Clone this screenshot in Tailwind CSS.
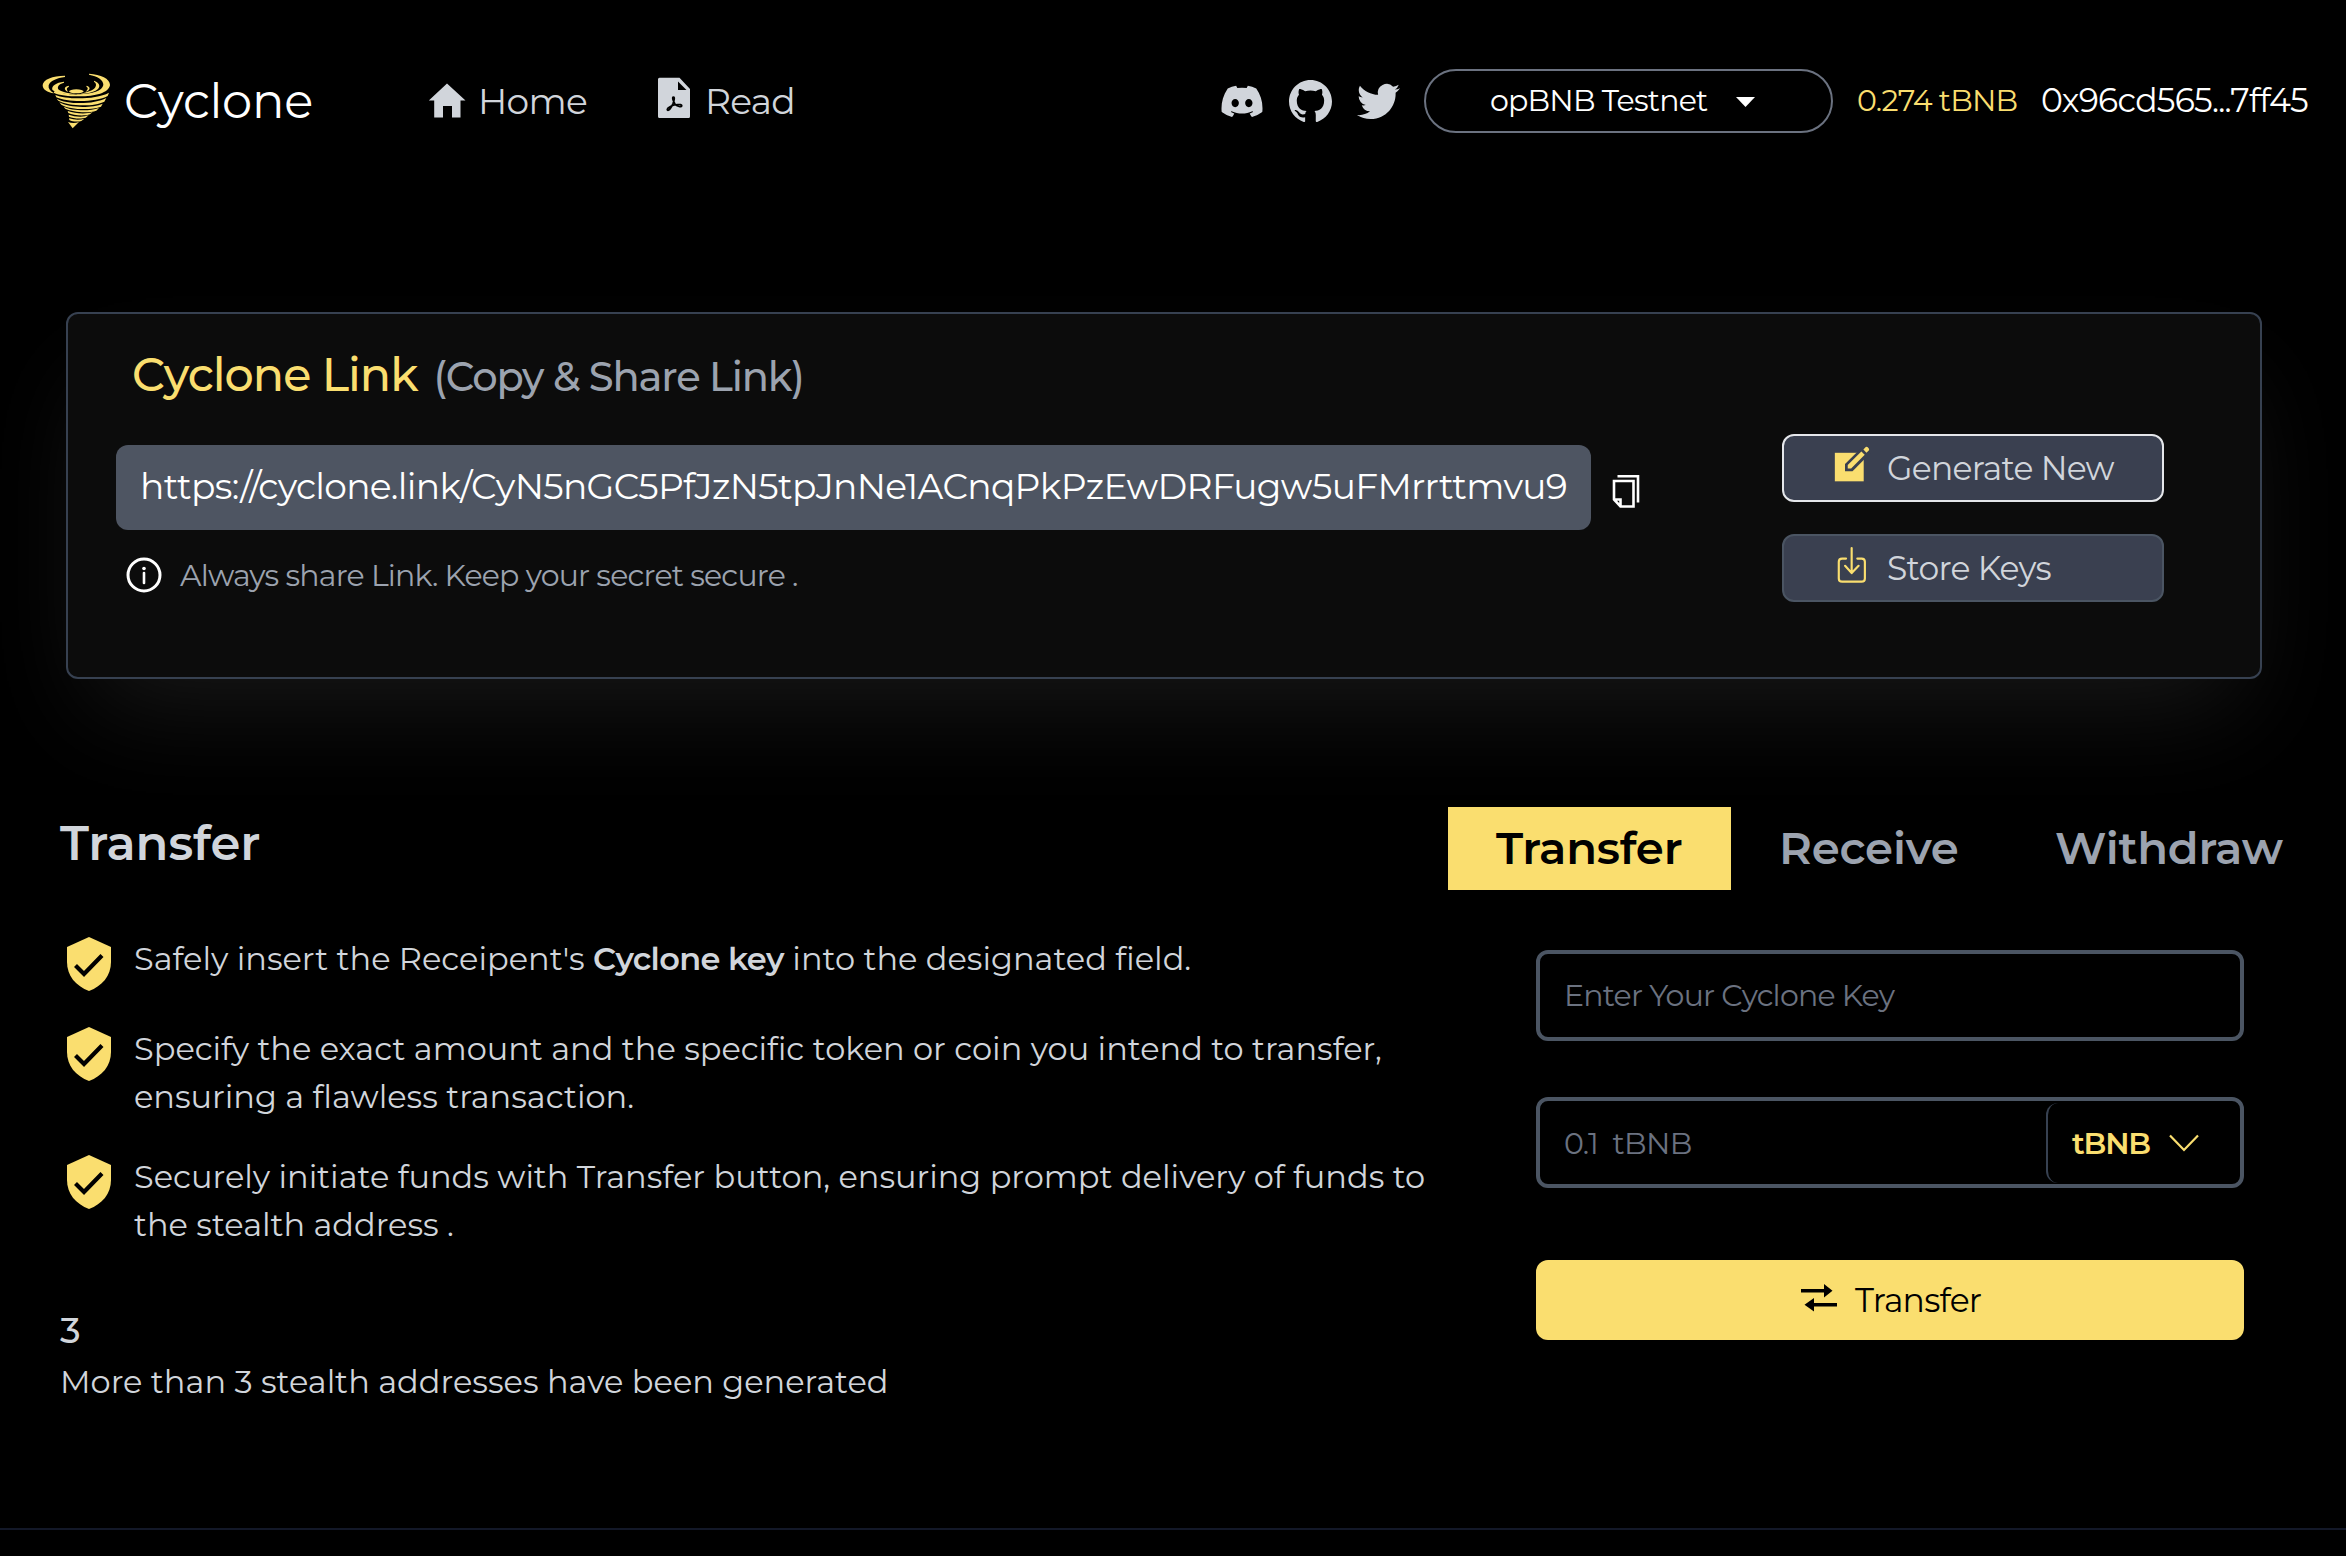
<!DOCTYPE html>
<html lang="en">
<head>
<meta charset="utf-8">
<title>Cyclone</title>
<script src="https://cdn.jsdelivr.net/npm/@tailwindcss/browser@4"></script>
</head>
<body class="flex h-[1556px] w-[2346px] flex-col overflow-hidden bg-black font-['Montserrat','Inter',sans-serif] whitespace-nowrap text-[#d1d5db]">

<header class="flex h-[202px] shrink-0 items-center pl-[41px]">
  <a class="flex w-[386px] items-center text-[48px] text-white">
    <svg class="mr-[13px] h-[56px] w-[70px]" viewBox="63 68 210 168" fill="#fade6f">
      <path d="M135 76C98 76 68 88 68 105C68 118 82 127 102 129C90 122 84 114 86 105C90 92 110 83 135 80z"/>
      <path d="M207 70C242 73 270 84 270 104C266 128 226 138 178 138C145 138 118 135 101 127L106 119C122 130 150 133 178 132C216 131 247 122 250 104C251 88 232 78 207 73z"/>
      <path d="M132 94C108 97 94 106 97 118C106 129 140 132 168 131C140 128 118 123 114 115C112 106 120 100 132 97z"/>
      <path d="M222 91C236 96 243 106 234 116C228 123 205 130 180 131C202 126 222 120 226 111C230 103 228 97 222 94z"/>
      <path d="M146 106C132 109 130 118 145 125C139 117 139 112 147 109zM200 106C212 109 213 119 196 125C204 117 206 112 199 109z"/>
      <ellipse cx="169" cy="123" rx="22" ry="6"/>
      <path d="M106 134C140 148 225 149 267 127L263 137C228 157 140 156 109 141z"/>
      <path d="M110 145C142 163 222 163 259 143L253 154C222 170 145 168 115 151z"/>
      <path d="M118 156C146 173 216 174 248 160L243 169C216 180 150 179 124 163z"/>
      <path d="M131 169C155 181 205 184 237 173L229 181C205 189 158 186 136 175z"/>
      <path d="M143 182C165 190 200 192 218 185L210 192C194 198 160 196 145 188z"/>
      <path d="M146 193C164 200 190 201 206 195L197 202C184 206 160 205 147 199z"/>
      <path d="M147 204C162 209 180 210 193 205L184 212C174 215 157 214 148 209z"/>
      <path d="M144 215C154 219 166 219 177 215L158 234z"/>
    </svg>
    <span class="tracking-[-0.2px]">Cyclone</span>
  </a>
  <nav class="flex w-[794px] items-center pl-[1px] text-[36px] tracking-[-0.7px]">
    <a class="flex w-[230px] items-center">
      <svg class="mr-[12px] h-[36px] w-[38px]" viewBox="0 0 38 36" fill="currentColor"><path d="M19 .5L37.500 17.500H32.500V34.500H24V23H15V34.500H6.200V17.500H.8z"/></svg>
      <span class="pb-[1px]">Home</span>
    </a>
    <a class="flex items-center">
      <svg class="mt-[-6px] mr-[15px] h-[42px] w-[32px]" viewBox="0 0 32 42"><path d="M1.500 .7H21.500L32 12V39.500a1.500 1.500 0 0 1-1.500 1.500H1.500A1.500 1.500 0 0 1 0 39.500V2.200A1.500 1.500 0 0 1 1.500 .7z" fill="currentColor"/><path d="M20 4.500V13H28.500z" fill="#000"/><path d="M15.500 20c-1.800 0-.2 4.500 1.500 7 1.800 2.400 6.800 3.600 6.800 1.700 0-2-7.500-1.200-10.500.2-2.800 1.300-4.800 3-3.800 4.200 1.300 1.200 4-3 5.500-6.500 1-2.700 2-6.600.5-6.600z" fill="none" stroke="#000" stroke-width="1.700"/></svg>
      <span class="pb-[1px]">Read</span>
    </a>
  </nav>
  <div class="flex w-[203px] items-center">
    <svg class="mr-[26px] h-[41px] w-[42px]" viewBox="0 0 16 16" fill="currentColor"><path d="M13.545 2.907a13.227 13.227 0 0 0-3.257-1.011.05.05 0 0 0-.052.025c-.141.25-.297.577-.406.833a12.19 12.19 0 0 0-3.658 0 8.258 8.258 0 0 0-.412-.833.051.051 0 0 0-.052-.025c-1.125.194-2.220.534-3.257 1.011a.041.041 0 0 0-.021.018C.356 6.024-.213 9.047.066 12.032c.001.014.010.028.021.037a13.276 13.276 0 0 0 3.995 2.020.05.05 0 0 0 .056-.019c.308-.420.582-.863.818-1.329a.05.05 0 0 0-.010-.059.051.051 0 0 0-.018-.011 8.875 8.875 0 0 1-1.248-.595.05.05 0 0 1-.020-.066.051.051 0 0 1 .015-.019c.084-.063.168-.129.248-.195a.05.05 0 0 1 .051-.007c2.619 1.196 5.454 1.196 8.041 0a.052.052 0 0 1 .053.007c.08.066.164.132.248.195a.051.051 0 0 1-.004.085 8.254 8.254 0 0 1-1.249.594.05.05 0 0 0-.030.030.052.052 0 0 0 .003.041c.24.465.515.909.817 1.329a.05.05 0 0 0 .056.019 13.235 13.235 0 0 0 4.001-2.020.049.049 0 0 0 .021-.037c.334-3.451-.559-6.449-2.366-9.106a.034.034 0 0 0-.020-.019Zm-8.198 7.307c-.789 0-1.438-.724-1.438-1.612 0-.889.637-1.613 1.438-1.613.807 0 1.450.730 1.438 1.613 0 .888-.637 1.612-1.438 1.612Zm5.316 0c-.788 0-1.438-.724-1.438-1.612 0-.889.637-1.613 1.438-1.613.807 0 1.451.730 1.438 1.613 0 .888-.631 1.612-1.438 1.612Z"/></svg>
    <svg class="mr-[25px] h-[44px] w-[43px]" viewBox="0 0 24 24" fill="currentColor"><path d="M12 .297c-6.630 0-12 5.373-12 12 0 5.303 3.438 9.800 8.205 11.385.6.113.820-.258.820-.577 0-.285-.010-1.040-.015-2.040-3.338.724-4.042-1.610-4.042-1.610C4.422 18.070 3.633 17.700 3.633 17.700c-1.087-.744.084-.729.084-.729 1.205.084 1.838 1.236 1.838 1.236 1.070 1.835 2.809 1.305 3.495.998.108-.776.417-1.305.760-1.605-2.665-.3-5.466-1.332-5.466-5.930 0-1.310.465-2.380 1.235-3.220-.135-.303-.540-1.523.105-3.176 0 0 1.005-.322 3.300 1.230.960-.267 1.980-.399 3-.405 1.020.006 2.040.138 3 .405 2.280-1.552 3.285-1.230 3.285-1.230.645 1.653.240 2.873.120 3.176.765.840 1.230 1.910 1.230 3.220 0 4.610-2.805 5.625-5.475 5.920.420.360.810 1.096.810 2.220 0 1.606-.015 2.896-.015 3.286 0 .315.210.690.825.570C20.565 22.092 24 17.592 24 12.297c0-6.627-5.373-12-12-12"/></svg>
    <svg class="h-[43px] w-[43px]" viewBox="0 0 24 24" fill="currentColor"><path d="M23.953 4.570a10 10 0 01-2.825.775 4.958 4.958 0 002.163-2.723c-.951.555-2.005.959-3.127 1.184a4.920 4.920 0 00-8.384 4.482C7.690 8.095 4.067 6.130 1.640 3.162a4.822 4.822 0 00-.666 2.475c0 1.710.870 3.213 2.188 4.096a4.904 4.904 0 01-2.228-.616v.060a4.923 4.923 0 003.946 4.827 4.996 4.996 0 01-2.212.085 4.936 4.936 0 004.604 3.417 9.867 9.867 0 01-6.102 2.105c-.390 0-.779-.023-1.170-.067a13.995 13.995 0 007.557 2.209c9.053 0 13.998-7.496 13.998-13.985 0-.210 0-.420-.015-.630A9.935 9.935 0 0024 4.590z"/></svg>
  </div>
  <button class="flex h-[64px] w-[409px] items-center rounded-full border-2 border-[#6b7280] pl-[64px] text-[30px] text-white">
    <span class="w-[246px] pb-[1px] text-left tracking-[-0.8px]">opBNB Testnet</span>
    <svg class="mt-[1px] h-[10px] w-[19px]" viewBox="0 0 19 10" fill="currentColor"><path d="M0 0H19L9.500 10z"/></svg>
  </button>
  <span class="ml-[24px] w-[184px] pb-[1px] text-[30px] tracking-[-0.8px] text-[#fade6f]">0.274 tBNB</span>
  <span class="text-[33px] tracking-[-0.75px] text-white">0x96cd565...7ff45</span>
</header>

<section class="mt-[110px] ml-[66px] flex h-[367px] w-[2196px] shrink-0 rounded-xl border-2 border-[#374151] bg-[#0c0c0c] shadow-[0_50px_100px_-24px_rgba(255,255,255,0.095)]">
  <div class="flex w-[1714px] flex-col pl-[48px]">
    <h2 class="h-[121px] pl-[16px] text-[46px] leading-[121px] font-medium tracking-[-1px] text-[#fade6f]">Cyclone Link<span class="ml-[16px] text-[40px] tracking-[-1.15px] text-[#9ca3af]">(Copy &amp; Share Link)</span></h2>
    <div class="mt-[10px] flex h-[85px] items-center">
      <div class="flex h-full w-[1475px] items-center rounded-xl bg-[#4e5562] pb-[3px] pl-[24px] text-[36px] tracking-[-0.68px] text-white">https://cyclone.link/CyN5nGC5PfJzN5tpJnNe1ACnqPkPzEwDRFugw5uFMrrttmvu9</div>
      <svg class="mt-[7px] ml-[20px] h-[36px] w-[30px]" viewBox="1611 473 30 36" fill="none" stroke="#fff" stroke-width="2.600"><path d="M1614 481H1633.500V506.500H1620.500L1614 499.500zM1614 499.500H1620.500V506.500M1617.500 476.300H1638V502.500"/></svg>
    </div>
    <div class="flex h-[90px] items-center pl-[10px]">
      <svg class="mr-[18px] h-[36px] w-[36px]" viewBox="0 0 36 36" fill="none" stroke="#fff"><circle cx="18" cy="18" r="16" stroke-width="3"/><path d="M18 16V26" stroke-width="2.600" stroke-linecap="round"/><circle cx="18" cy="11.500" r="1.800" fill="#fff" stroke="none"/></svg>
      <span class="pt-[1px] text-[30px] tracking-[-0.8px] text-[#9ca3af]">Always share Link. Keep your secret secure .</span>
    </div>
  </div>
  <div class="flex flex-col gap-8 pt-[120px] text-[33px] tracking-[-0.75px]">
    <button class="flex h-[68px] w-[382px] items-center rounded-xl border-2 border-[#e5e7eb] bg-[#3a4050] pl-[50px]">
      <svg class="mt-[-8px] mr-[16px] h-[36px] w-[37px]" viewBox="164 108 108 106"><path d="M166 128H251V212H166z" fill="#fade6f"/><path d="M196 182V161L246 112L270 130L218 182z" fill="#3a4050"/><path d="M204 174V164L244 124L254 134L214 174zM250 118L257 111Q260 109 263 112L266 115Q268 118 266 121L259 128z" fill="#fade6f"/></svg>
      <span class="pt-[1px]">Generate New</span>
    </button>
    <button class="flex h-[68px] w-[382px] items-center rounded-xl border-2 border-[#4b5563] bg-[#3a4050] pl-[52px]">
      <svg class="mt-[-8px] mr-[19px] h-[37px] w-[32px]" viewBox="170 404 94 112" fill="none" stroke="#fade6f" stroke-width="6.500" stroke-linecap="round" stroke-linejoin="round"><path d="M199 442H187q-10 0-10 10V502q0 10 10 10H246q10 0 10-10V452q0-10-10-10H233M216 410V484M196 464L216 486L237 464"/></svg>
      <span class="pt-[1px]">Store Keys</span>
    </button>
  </div>
</section>

<main class="flex h-[851px] shrink-0 border-b-2 border-[#131828]">
  <div class="w-[1448px] pl-[60px] text-[32px]">
    <h2 class="mt-[134px] h-[60px] text-[48px] leading-[60px] font-semibold">Transfer</h2>
    <ul class="mt-[62px] flex flex-col gap-8 leading-[48px]">
      <li class="flex h-[58px]">
        <svg class="mt-[2px] mr-[22px] ml-[6px] h-[54px] w-[46px] shrink-0" viewBox="0 0 46 54"><path d="M23 0L45 10V25C45 39 36 49 23 54C10 49 1 39 1 25V10z" fill="#fade6f"/><path d="M9.500 28.500L18 37L36 18.500" fill="none" stroke="#000" stroke-width="4.200"/></svg>
        <p>Safely insert the Receipent's <b class="font-semibold tracking-[-0.65px]">Cyclone key</b> into the designated field.</p>
      </li>
      <li class="flex h-[96px]">
        <svg class="mt-[2px] mr-[22px] ml-[6px] h-[54px] w-[46px] shrink-0" viewBox="0 0 46 54"><path d="M23 0L45 10V25C45 39 36 49 23 54C10 49 1 39 1 25V10z" fill="#fade6f"/><path d="M9.500 28.500L18 37L36 18.500" fill="none" stroke="#000" stroke-width="4.200"/></svg>
        <p>Specify the exact amount and the specific token or coin you intend to transfer,<br>ensuring a flawless transaction.</p>
      </li>
      <li class="flex h-[96px]">
        <svg class="mt-[2px] mr-[22px] ml-[6px] h-[54px] w-[46px] shrink-0" viewBox="0 0 46 54"><path d="M23 0L45 10V25C45 39 36 49 23 54C10 49 1 39 1 25V10z" fill="#fade6f"/><path d="M9.500 28.500L18 37L36 18.500" fill="none" stroke="#000" stroke-width="4.200"/></svg>
        <p>Securely initiate funds with Transfer button, ensuring prompt delivery of funds to<br>the stealth address .</p>
      </li>
    </ul>
    <p class="mt-[55px] text-[36px] leading-[52px] font-medium">3</p>
    <p class="leading-[52px] tracking-[0.02px]">More than 3 stealth addresses have been generated</p>
  </div>
  <div class="pt-[128px]">
    <div class="flex h-[83px] items-center text-[45px] font-semibold tracking-[-0.2px] text-[#9ca3af]">
      <span class="flex h-full w-[283px] items-center bg-[#fade6f] pb-[2px] pl-[48px] text-black">Transfer</span>
      <span class="w-[324px] pb-[2px] pl-[48px]">Receive</span>
      <span class="pb-[2px] tracking-[-0.3px]">Withdraw</span>
    </div>
    <div class="mt-[60px] ml-[88px] flex h-[91px] w-[708px] items-center rounded-xl border-4 border-[#4b5563] pl-[24px] text-[30px] tracking-[-0.8px] text-[#6b7280]">Enter Your Cyclone Key</div>
    <div class="mt-[56px] ml-[88px] flex h-[91px] w-[708px] items-center rounded-xl border-4 border-[#4b5563] pl-[24px] text-[30px]">
      <span class="w-[482px] pt-[1px] tracking-[-0.7px] whitespace-pre text-[#6b7280]">0.1  tBNB</span>
      <div class="flex h-[80px] items-center rounded-l-xl border-l-2 border-[#374151] pl-[24px] font-semibold text-[#fade6f]">
        <span class="w-[97px] pt-[1px] tracking-[-1.2px]">tBNB</span>
        <svg class="h-[18px] w-[30px]" viewBox="0 0 30 18" fill="none" stroke="currentColor" stroke-width="2.200"><path d="M1 1.500L15 16L29 1.500"/></svg>
      </div>
    </div>
    <button class="mt-[72px] ml-[88px] flex h-[80px] w-[708px] items-center rounded-xl bg-[#fade6f] pl-[265px] text-[33px] text-black">
      <svg class="mt-[-5px] mr-[18px] h-[28px] w-[36px]" viewBox="0 0 36 28" fill="currentColor"><path d="M0 5H23V0L31.500 6.700L23 13.500V8.500H0zM36 22.500H13V27.500L3.500 20.700L13 14V19H36z"/></svg>
      <span class="pt-[1px] tracking-[-0.75px]">Transfer</span>
    </button>
  </div>
</main>
</body>
</html>
